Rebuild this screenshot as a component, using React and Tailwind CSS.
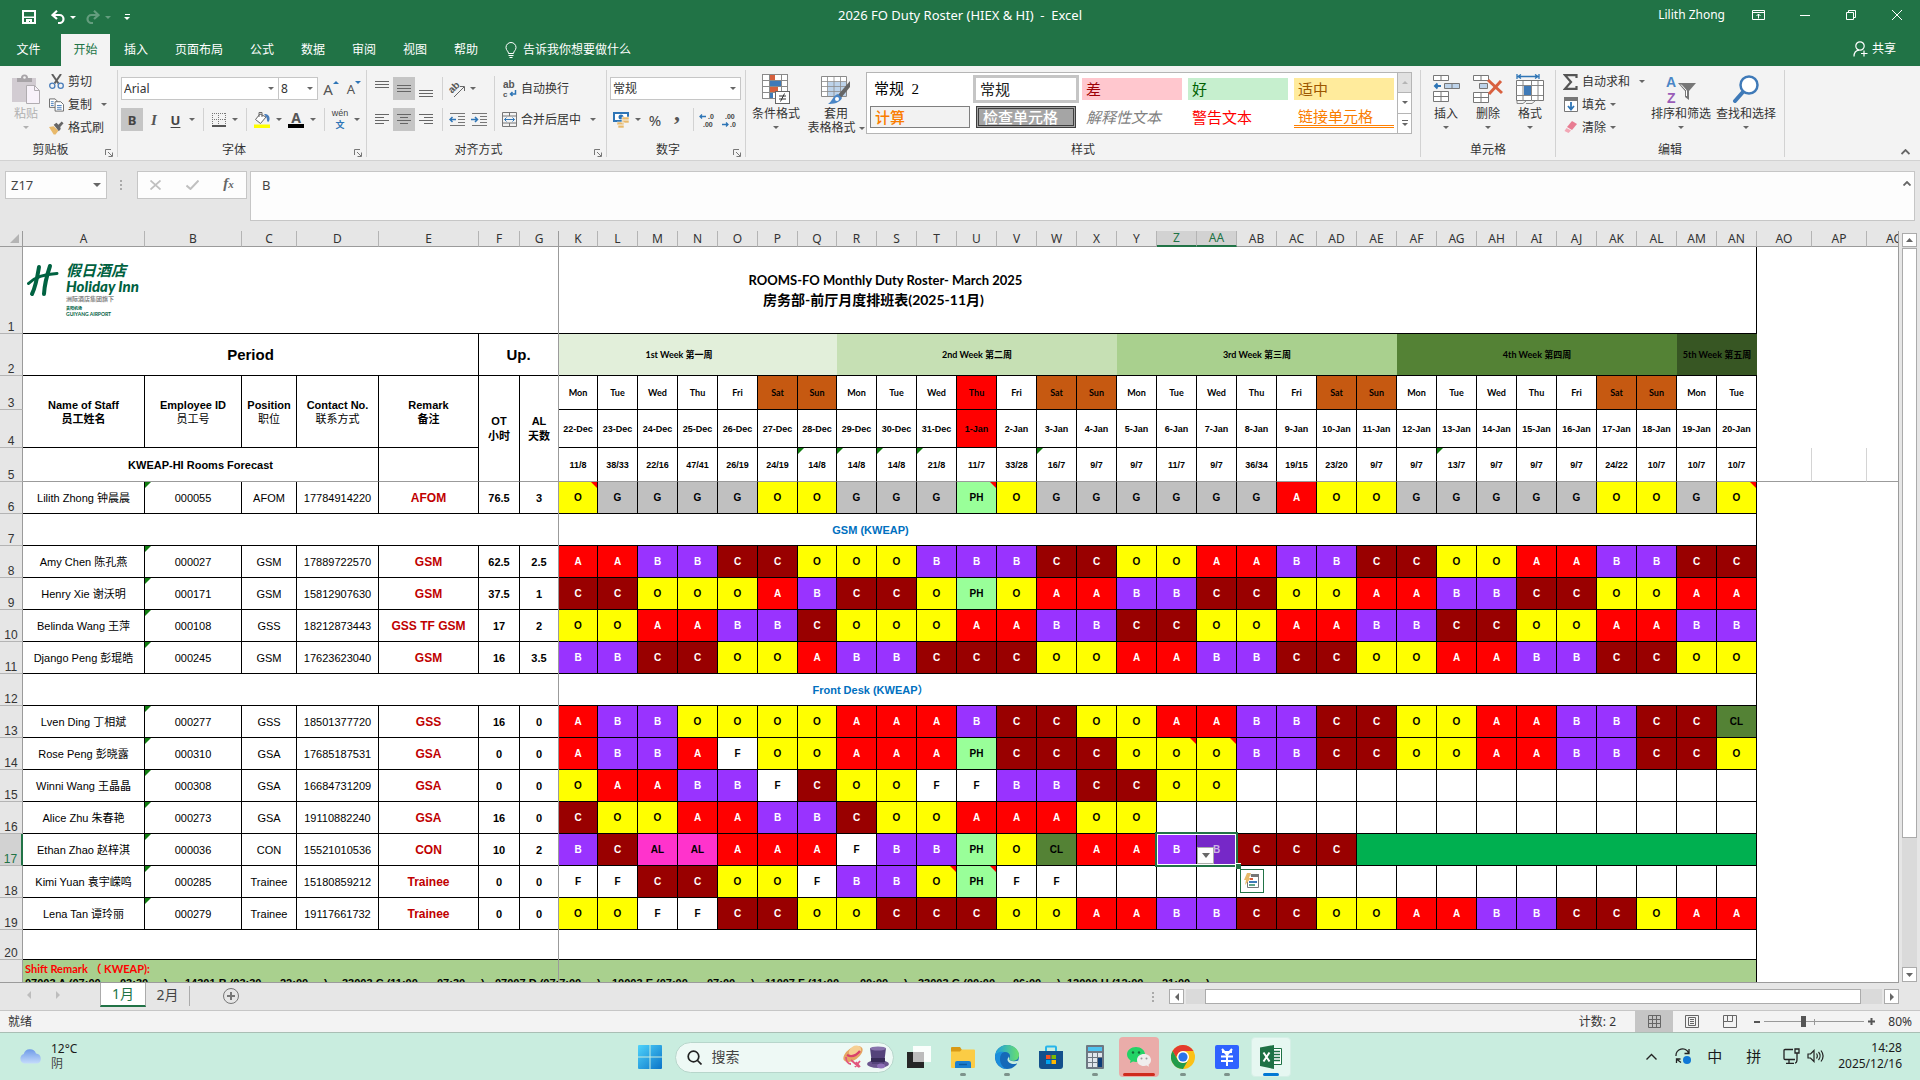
import React from "react";

/* ---------- sheet data ---------- */

const COLUMNS = [
  ["A", 122], ["B", 97], ["C", 55], ["D", 82], ["E", 100], ["F", 41], ["G", 39],
  ["K", 39], ["L", 40], ["M", 40], ["N", 40], ["O", 40], ["P", 40], ["Q", 39],
  ["R", 40], ["S", 40], ["T", 40], ["U", 40], ["V", 40], ["W", 40], ["X", 40],
  ["Y", 40], ["Z", 40], ["AA", 40], ["AB", 40], ["AC", 40], ["AD", 40], ["AE", 40],
  ["AF", 40], ["AG", 40], ["AH", 40], ["AI", 40], ["AJ", 40], ["AK", 40], ["AL", 40],
  ["AM", 40], ["AN", 40], ["AO", 55], ["AP", 55], ["AQ", 0],
];

const WEEKDAYS = ["Mon", "Tue", "Wed", "Thu", "Fri", "Sat", "Sun"];
const DAYS = Array.from({ length: 30 }, (_, i) => ({
  name: WEEKDAYS[i % 7],
  date: i < 10 ? `${22 + i}-Dec` : `${i - 9}-Jan`,
  holiday: i === 10,
  weekend: i % 7 > 4,
}));

const FORECAST =
  "11/8 38/33 22/16 47/41 26/19 24/19 14/8^ 14/8^ 14/8^ 21/8^ 11/7 33/28 16/7^ 9/7 9/7 11/7 9/7 36/34 19/15 23/20 9/7 9/7 13/7^ 9/7 9/7 9/7 24/22 10/7 10/7 10/7".split(" ");

const CODE_STYLE = {
  O: "bg-[#ffff00] text-black",
  G: "bg-[#c0c0c0] text-black",
  A: "bg-[#ff0000] text-white",
  B: "bg-[#9933ff] text-white",
  C: "bg-[#990000] text-white",
  PH: "bg-[#99ff99] text-black",
  AL: "bg-[#ff33cc] text-black",
  CL: "bg-[#548235] text-black",
  F: "bg-white text-black",
  _: "bg-white text-transparent",
};

const TEAM = [
  { row: 6, name: "Lilith Zhong 钟晨晨", id: "000055", pos: "AFOM", tel: "17784914220", remark: "AFOM", ot: "76.5", al: "3",
    codes: "O* G G G G O O G G G PH* O G G G G G G A O O G G G G G O O G O*" },
  { row: 7, section: "GSM (KWEAP)" },
  { row: 8, name: "Amy Chen 陈孔燕", id: "000027", pos: "GSM", tel: "17889722570", remark: "GSM", ot: "62.5", al: "2.5",
    codes: "A A B B C C O O O B B B C C O O A A B B C C O O A A B B C C" },
  { row: 9, name: "Henry Xie 谢沃明", id: "000171", pos: "GSM", tel: "15812907630", remark: "GSM", ot: "37.5", al: "1",
    codes: "C C O O O A B C C O PH O A A B B C C O O A A B B C C O O A A" },
  { row: 10, name: "Belinda Wang 王萍", id: "000108", pos: "GSS", tel: "18212873443", remark: "GSS TF GSM", ot: "17", al: "2",
    codes: "O O A A B B C O O O A A B B C C O O A A B B C C O O A A B B" },
  { row: 11, name: "Django Peng 彭琨皓", id: "000245", pos: "GSM", tel: "17623623040", remark: "GSM", ot: "16", al: "3.5",
    codes: "B B C C O O A B B C C C O O A A B B C C O O A A B B C C O O" },
  { row: 12, section: "Front Desk (KWEAP）" },
  { row: 13, name: "Lven Ding 丁相斌", id: "000277", pos: "GSS", tel: "18501377720", remark: "GSS", ot: "16", al: "0",
    codes: "A B B O O O O A A A B C C O O A A B B C C O O A A B B C C CL" },
  { row: 14, name: "Rose Peng 彭晓露", id: "000310", pos: "GSA", tel: "17685187531", remark: "GSA", ot: "0", al: "0",
    codes: "A B B A F O O A A A PH C C C O O* O* B B C C O O A A B B C C O" },
  { row: 15, name: "Winni Wang 王晶晶", id: "000308", pos: "GSA", tel: "16684731209", remark: "GSA", ot: "0", al: "0",
    codes: "O A A B B F C O O F F B B C C O O _ _ _ _ _ _ _ _ _ _ _ _ _" },
  { row: 16, name: "Alice Zhu 朱春艳", id: "000273", pos: "GSA", tel: "19110882240", remark: "GSA", ot: "16", al: "0",
    codes: "C O O A A B B C O O A A A O O _ _ _ _ _ _ _ _ _ _ _ _ _ _ _" },
  { row: 17, name: "Ethan Zhao 赵梓淇", id: "000036", pos: "CON", tel: "15521010536", remark: "CON", ot: "10", al: "2",
    codes: "B C AL AL A A A F B B PH O CL A A B B C C C", rest: 10 },
  { row: 18, name: "Kimi Yuan 袁宇嵘鸣", id: "000285", pos: "Trainee", tel: "15180859212", remark: "Trainee", ot: "0", al: "0",
    codes: "F F C C O O F B B O* PH* F F _ _ _ _ _ _ _ _ _ _ _ _ _ _ _ _ _" },
  { row: 19, name: "Lena Tan 谭玲丽", id: "000279", pos: "Trainee", tel: "19117661732", remark: "Trainee", ot: "0", al: "0",
    codes: "O O F F C C O O C C C O O A A B B C C O O A A B B C C O A A" },
];

const SHIFTS = [
  ["07003 A (07:00", "03:30", "w-[160px]"],
  ["14301 B (03:30", "22:00", "w-[157px]"],
  ["33003 C (11:00", "07:30", "w-[153px]"],
  ["07007 D (07:7:00", "", "w-[117px]"],
  ["10003 E (07:00", "07:00", "w-[153px]"],
  ["11007 F (11:00", "00:00", "w-[153px]"],
  ["33003 G (00:00", "06:00", "w-[149px]"],
  ["12000 H (12:00", "21:00", "w-[153px]"],
];

const UI = "font-['Noto_Sans','Noto_Sans_CJK_SC',sans-serif]";
const ARIAL = "font-['Liberation_Sans','Noto_Sans_CJK_SC',sans-serif]";
const CALIBRI = "font-['Lato','Noto_Sans_CJK_SC',sans-serif]";
const GLYPH = "Liberation Sans, sans-serif";

/* ---------- small pieces ---------- */

const Caret = ({ className = "text-[#666]" }) => (
  <svg viewBox="0 0 6 3" className={`h-[3px] w-[6px] shrink-0 ${className}`} fill="currentColor"><path d="M0 0h6L3 3z" /></svg>
);
const CaretButton = ({ label, className = "text-[#666]" }) => (
  <button type="button" aria-label={label} className="flex h-full w-3 items-center justify-center"><Caret className={className} /></button>
);
const Sep = () => <span className="mr-1 ml-[5px] h-full w-px shrink-0 bg-[#d2d2d2]" />;

const Group = ({ label, launcher, className = "", labelClass = "", children }) => (
  <section aria-label={label} className={`flex h-[87px] shrink-0 flex-col border-r border-[#d2d2d2] ${className}`}>
    <div className="flex flex-1 items-start">{children}</div>
    <div className="relative flex h-[14px] items-center justify-center leading-[14px] text-[#333]">
      <span className={labelClass}>{label}</span>
      {launcher && (
        <button type="button" aria-label={`${label} 设置`} className="absolute right-[4px] bottom-0">
          <svg viewBox="0 0 8 8" className="h-2 w-2" fill="none" stroke="#777"><path d="M.5 6V.5H6M3 3l4 4M7.500 3.500v4h-4" /></svg>
        </button>
      )}
    </div>
  </section>
);

const Big = ({ icon, label, label2, className = "", dim }) => (
  <button type="button" className={`flex shrink-0 flex-col items-center pt-1 ${dim ? "text-[#b1b1b1]" : "text-[#333]"} ${className}`}>
    <span className="flex h-[30px] items-center justify-center">{icon}</span>
    <span className="mt-[3px] leading-[14px] whitespace-nowrap">{label}</span>
    {label2 ? (
      <span className="flex items-center gap-[3px] leading-[14px] whitespace-nowrap">{label2}<Caret /></span>
    ) : (
      <span className="mt-[5px] flex"><Caret className={dim ? "text-[#b1b1b1]" : "text-[#666]"} /></span>
    )}
  </button>
);

const Small = ({ icon, label, caret, gap = "ml-[3px]" }) => (
  <button type="button" className="flex h-[23px] items-center gap-1 whitespace-nowrap text-[#333]">
    <span className="flex w-[15px] justify-center">{icon}</span>
    <span>{label}</span>
    {caret && <span className={gap}><Caret /></span>}
  </button>
);

const Tool = ({ label, on, className = "w-[22px]", children }) => (
  <button type="button" aria-label={label} aria-pressed={on ? true : undefined}
    className={`flex h-[23px] shrink-0 items-center justify-center ${on ? "bg-[#c5c5c5]" : ""} ${className}`}>{children}</button>
);

const Combo = ({ label, value, className }) => (
  <div className={`relative h-[23px] shrink-0 ${className}`}>
    <select aria-label={label} defaultValue={value} className="h-full w-full appearance-none border border-[#c6c6c6] bg-white pl-[2px] text-[#333]">
      <option>{value}</option>
    </select>
    <span className="pointer-events-none absolute inset-y-0 right-[5px] flex items-center"><Caret /></span>
  </div>
);

const Lines = ({ d, y = 0 }) => (
  <svg viewBox="0 0 16 22" className="h-[22px] w-4" stroke="#666" shapeRendering="crispEdges">
    <path transform={`translate(0 ${y})`} d={d} />
  </svg>
);
const L_FULL = "M1 7.500h14M1 10.500h14M1 13.500h14";

/* ---------- ribbon icons ---------- */

const PasteIcon = () => (
  <svg viewBox="0 0 28 30" className="h-[30px] w-7">
    <path fill="#d2ccd2" d="M0 4h24v24H0z" /><path fill="#a8a4a8" d="M5 4h4a3.500 3.500 0 0 1 7 0h4v4H5z" /><circle cx="12.500" cy="3.500" r="1.300" fill="#f3f3f3" />
    <path fill="#f8f2fa" stroke="#b0acb0" d="M14.500 11.500h8l5 5v13h-13z" /><path fill="none" stroke="#b0acb0" d="M22.500 11.500v5h5" />
  </svg>
);
const CutIcon = () => (
  <svg viewBox="0 0 15 15" className="h-[15px] w-[15px]" fill="none">
    <path stroke="#5f5f5f" strokeWidth="2" d="M3 0l6.500 9.500M12 0L5.500 9.500" />
    <circle cx="3.300" cy="11.700" r="2.600" stroke="#4a7ebb" strokeWidth="1.300" /><circle cx="11.700" cy="11.700" r="2.600" stroke="#4a7ebb" strokeWidth="1.300" />
  </svg>
);
const CopyIcon = () => (
  <svg viewBox="0 0 16 14" className="h-[14px] w-4" fill="#fff" stroke="#666">
    <path d="M.5.500h6l2 2v7h-8z" /><path d="M6.500 3.500h6l3 3v7h-9z" /><path stroke="#4a7ebb" d="M2 3.500h3M2 5.500h3M2 7.500h3M8.500 7.500h5M8.500 9.500h5M8.500 11.500h5" />
  </svg>
);
const BrushIcon = () => (
  <svg viewBox="0 0 16 14" className="h-[14px] w-4">
    <path fill="#e8b96a" d="M0 6l5-1 5 5-3 4H5z" /><path fill="#666" d="M5 3.500l3-2 2 2L13.500 0l2 2-3.500 4 .5 2-2 2.500z" />
  </svg>
);
const BorderIcon = () => (
  <svg viewBox="0 0 14 14" className="h-[14px] w-[14px]" stroke="#777" shapeRendering="crispEdges">
    <path strokeDasharray="1 1" d="M0 .5h14M0 6.500h14M.5 0v13M6.500 0v13M13.500 0v13" /><path strokeWidth="2" stroke="#555" d="M0 13h14" />
  </svg>
);
const FillIcon = () => (
  <svg viewBox="0 0 16 17" className="h-[17px] w-4">
    <path fill="#fff" stroke="#666" d="M6 3L1.500 8.500 6.500 12.500 12 6z" /><path fill="none" stroke="#666" d="M5 6V1.500h3V6" />
    <path fill="#4a7ebb" d="M10 3c4 0 6 2 5.500 5.500S13 11 13 9c0-2-.5-3-3-6z" /><path fill="#ff0" d="M0 13.500h16V17H0z" />
  </svg>
);
const FontColorIcon = () => (
  <span className="flex w-4 flex-col items-center"><b className="text-[14px] leading-[13px] text-[#555]">A</b><span className="h-[4px] w-4 bg-black" /></span>
);
const WrapIcon = () => (
  <svg viewBox="0 0 14 20" className="h-5 w-[14px] overflow-visible" fontFamily={GLYPH}>
    <text x="0" y="9" fontSize="10" fontWeight="700" fill="#555">ab</text><text x="0" y="18" fontSize="8" fontWeight="700" fill="#555">c</text>
    <path fill="none" stroke="#2e75b6" strokeWidth="1.500" d="M12.500 11v4H7.500M9.500 13l-2 2 2 2" />
  </svg>
);
const MergeIcon = () => (
  <svg viewBox="0 0 15 15" className="h-[15px] w-[15px]" fill="none" stroke="#777">
    <path d="M.5.500h14v14H.5zM.5 4h14M.5 11h14M7.500 0v4M7.500 11v4" /><path stroke="#2e75b6" d="M2.500 7.500h10M4.500 5.500l-2 2 2 2M10.500 5.500l2 2-2 2" />
  </svg>
);
const IndentIcon = ({ right }) => (
  <svg viewBox="0 0 16 13" className="h-[13px] w-4" stroke="#777" fill="none">
    <path d="M1 .5h15M9 3.500h7M9 6.500h7M9 9.500h7M1 12.500h15" /><path stroke="#2e75b6" strokeWidth="1.500" d={right ? "M0 6.500h6M4 4l2.500 2.500L4 9" : "M7 6.500H1M3.500 4L1 6.500 3.500 9"} />
  </svg>
);
const MoneyIcon = () => (
  <svg viewBox="0 0 16 17" className="h-[17px] w-4">
    <path fill="#fff" stroke="#2e75b6" strokeWidth="2" d="M1 2h14v8H1z" /><circle cx="8" cy="6" r="2.500" fill="#2e75b6" />
    <path fill="#e8b96a" stroke="#f3f3f3" strokeWidth=".6" d="M9 6h7v3H9zM9 9h7v3H9zM4 11h7v3H4zM5 14h6v3H5z" />
  </svg>
);
const DecimalIcon = ({ more }) => (
  <svg viewBox="0 0 16 16" className="h-4 w-4 overflow-visible" fontFamily={GLYPH}>
    <text x={more ? 9 : 4} y="7" fontSize="7" fontWeight="700" fill="#444">{more ? ".0" : ".00"}</text><text x={more ? 4 : 9} y="15" fontSize="7" fontWeight="700" fill="#444">{more ? ".00" : ".0"}</text>
    <path fill="none" stroke="#2e75b6" strokeWidth="1.300" d={more ? "M7 4.500H1M3 2.500l-2 2 2 2" : "M1 12.500h6M5 10.500l2 2-2 2"} />
  </svg>
);
const CondIcon = () => (
  <svg viewBox="0 0 30 30" className="h-[30px] w-[30px]" fill="none" stroke="#8a8a8a" shapeRendering="crispEdges">
    <path fill="#fff" d="M1.500.500h25v24h-25z" /><path d="M1 6.500h25M1 12.500h25M1 18.500h25M8.500 0v24M20.500 0v24" />
    <path fill="#d6603d" stroke="none" d="M9 1h5v5H9zM9 13h8v5H9z" /><path fill="#3f7ab8" stroke="none" d="M9 7h11v5H9zM9 19h3v5H9z" />
    <path fill="#fff" stroke="#666" d="M14.500 17.500h14v12h-14z" /><path stroke="#333" shapeRendering="auto" d="M18 22h7M18 25h7M23.500 19.500l-4 8" />
  </svg>
);
const TableStyleIcon = () => (
  <svg viewBox="0 0 30 30" className="h-[30px] w-[30px]">
    <path fill="#fff" stroke="#8a8a8a" d="M.5 2.500h25v20h-25z" /><path fill="#bdd3ea" d="M7 8h18v14H7z" /><path fill="none" stroke="#8a8a8a" strokeWidth=".8" d="M0 7.500h25M0 12.500h25M0 17.500h25M6.500 2v20M13 2v20M19.500 2v20" />
    <path fill="#666" d="M29 7v6l-9 11-3-3z" /><path fill="#4a86c6" d="M17 20l4 4c-2 5-9 6-14 6 4-2 5-9 10-10z" /><circle cx="16" cy="25" r="2" fill="#fff" />
  </svg>
);
const InsertCellsIcon = () => (
  <svg viewBox="0 0 27 28" className="h-7 w-[27px]" fill="#fff" stroke="#777">
    <path d="M.5.500h15v5H.5zM8 .5v5M.5 16.500h15v10H.5zM8 16.500v10M.5 21.500h15" /><path fill="#bdd3ea" d="M11.500 8.500h15v5h-15zM19 8.500v5" /><path fill="none" stroke="#2e75b6" strokeWidth="2" d="M8 11H2M4.500 8.500L2 11l2.500 2.500" />
  </svg>
);
const DeleteCellsIcon = () => (
  <svg viewBox="0 0 30 28" className="h-7 w-[30px]" fill="#fff" stroke="#777">
    <path d="M.5.500h15v5H.5zM8 .5v5M.5 17.500h15v10H.5zM8 17.500v10M.5 22.500h15" /><path fill="#bdd3ea" d="M6.500 8.500h8v5h-8z" /><path fill="none" stroke="#d9603f" strokeWidth="3" d="M15 5l14 13M28 6L16 19" />
  </svg>
);
const FormatCellsIcon = () => (
  <svg viewBox="0 0 28 30" className="h-[30px] w-7" fill="none" stroke="#888">
    <path stroke="#2e75b6" strokeWidth="1.300" d="M1 0v5M23 0v5M2 2.500h20M5 .5l-3 2 3 2M19 .5l3 2-3 2" /><path fill="#fff" stroke="#777" d="M.5 6.500h27v20H.5z" /><path d="M7 7v20M15.500 7v20M22 7v20M0 11.500h27M0 21.500h27" />
    <path fill="#3f7ab8" stroke="none" d="M8 12h7v9H8z" /><path d="M1 27v2.500h6l3-2.500M10 29.500h6l3-2.500" />
  </svg>
);
const FillDownIcon = () => (
  <svg viewBox="0 0 14 15" className="h-[15px] w-[14px]"><path fill="#fff" stroke="#777" d="M.5.500h13v14H.5z" /><path fill="#777" d="M0 0h14v4H0z" /><path fill="none" stroke="#2e75b6" strokeWidth="1.800" d="M7 5v7M4 9l3 3.500L10 9" /></svg>
);
const EraserIcon = () => (
  <svg viewBox="0 0 14 13" className="h-[13px] w-[14px]"><path fill="#e87c92" d="M8 0l5 3-5 6-5-3z" /><path fill="#f2a7b5" d="M2.500 7l4.500 2.500L4.500 12 .5 10z" /></svg>
);
const SortIcon = () => (
  <svg viewBox="0 0 30 30" className="h-[30px] w-[30px] overflow-visible" fontFamily={GLYPH}>
    <text x="0" y="13" fontSize="14" fontWeight="700" fill="#4a86c6">A</text><text x="1" y="29" fontSize="14" fontWeight="700" fill="#9a5cb8">Z</text>
    <path fill="#777" d="M12 9h18l-7 8v9l-4-3v-6z" /><path stroke="#fff" d="M15 10.500l5.500 6V22" fill="none" />
  </svg>
);
const FindIcon = () => (
  <svg viewBox="0 0 28 28" className="h-7 w-7" fill="none" stroke="#3f7ab8"><circle cx="17" cy="10" r="8.500" fill="#fff" strokeWidth="2.500" /><path strokeWidth="4" strokeLinecap="round" d="M10.500 17.500L3 26" /></svg>
);

/* ---------- window sections ---------- */

const MENU = ["插入", "页面布局", "公式", "数据", "审阅", "视图", "帮助"];

function TitleBar() {
  return (
    <header className="relative flex h-[34px] items-center text-white">
      <div className="flex items-center pl-[22px]">
        <button type="button" aria-label="保存"><svg viewBox="0 0 14 14" className="h-[14px] w-[14px]"><path fill="none" stroke="#fff" strokeWidth="2" d="M1 1h12v12H1z" /><path fill="#fff" d="M1 6.500h12v1.500H1zM4 9h6v5H8v-3H7v3H4z" /></svg></button>
        <button type="button" aria-label="撤消" className="ml-[15px]"><svg viewBox="0 0 14 14" className="h-[14px] w-[14px]" fill="none" stroke="#fff" strokeWidth="2.200"><path d="M6 .8L1.500 5 6 9M2 5h6.500a4 4 0 0 1 0 8H7" /></svg></button>
        <span className="ml-[5px]"><Caret className="text-white" /></span>
        <button type="button" aria-label="恢复" className="ml-[10px] opacity-30"><svg viewBox="0 0 14 14" className="h-[14px] w-[14px]" fill="none" stroke="#fff" strokeWidth="2.200"><path d="M8 .8L12.500 5 8 9M12 5H5.500a4 4 0 0 0 0 8H7" /></svg></button>
        <span className="ml-[5px] opacity-30"><Caret className="text-white" /></span>
        <button type="button" aria-label="自定义快速访问工具栏" className="ml-[13px] flex flex-col items-center gap-[2px]"><span className="h-px w-[5px] bg-white" /><Caret className="text-white" /></button>
      </div>
      <h1 className="pointer-events-none absolute inset-x-0 pb-1 text-center text-[13px] whitespace-pre">2026 FO Duty Roster (HIEX &amp; HI)  -  Excel</h1>
      <div className="ml-auto flex items-center pr-[18px] pb-1">
        <span className="mr-[27px]">Lilith Zhong</span>
        <button type="button" aria-label="功能区显示选项" className="mr-[35px]"><svg viewBox="0 0 13 10" className="h-[10px] w-[13px]" fill="none" stroke="#fff"><path d="M.5.500h12v9H.5zM.5 2.500h12M6.500 8.500V4M4.500 6l2-2 2 2" /></svg></button>
        <button type="button" aria-label="最小化" className="mr-9"><svg viewBox="0 0 10 10" className="h-[10px] w-[10px]" stroke="#fff"><path d="M0 5.500h10" /></svg></button>
        <button type="button" aria-label="还原" className="mr-9"><svg viewBox="0 0 10 10" className="h-[10px] w-[10px]" fill="none" stroke="#fff"><path d="M.5 2.500h7v7h-7zM2.500 2.500v-2h7v7h-2" /></svg></button>
        <button type="button" aria-label="关闭"><svg viewBox="0 0 10 10" className="h-[10px] w-[10px]" stroke="#fff"><path d="M0 0l10 10M10 0L0 10" /></svg></button>
      </div>
    </header>
  );
}

function MenuBar() {
  return (
    <nav className="flex h-8 items-stretch text-white">
      <button type="button" className="w-[61px] pr-1">文件</button>
      <button type="button" className="w-[49px] bg-[#f3f3f3] text-[#217346]">开始</button>
      {MENU.map((m) => <button key={m} type="button" className="ml-px px-[13px]">{m}</button>)}
      <button type="button" className="ml-[14px] flex items-center gap-[6px]">
        <svg viewBox="0 0 12 17" className="h-[17px] w-3" fill="none" stroke="#fff"><path d="M3.500 11.500C3.500 9 1 8.500 1 5.500a5 5 0 0 1 10 0c0 3-2.500 3.500-2.500 6zM3.500 13.500h5M4.500 15.500h3" /></svg>
        告诉我你想要做什么
      </button>
      <button type="button" className="ml-auto flex items-center gap-1 pr-6 pb-[2px]">
        <svg viewBox="0 0 15 16" className="h-4 w-[15px]" fill="none" stroke="#fff" strokeWidth="1.200"><circle cx="7" cy="5" r="4.200" /><path d="M1 15.500C1 12 3 9.500 6 9.200M11 9.500v6M8 12.500h6.500" /></svg>
        共享
      </button>
    </nav>
  );
}

const StyleTile = ({ children, className }) => (
  <button type="button" className={`flex h-[22px] w-[100px] items-center pl-1 text-[15px] leading-[20px] whitespace-pre ${className}`}>{children}</button>
);

function Ribbon() {
  return (
    <div className="flex h-[95px] items-start overflow-hidden border-b border-[#d2d2d2] bg-[#f3f3f3] pt-1">
      <Group label="剪贴板" launcher className="w-[118px]" labelClass="pr-4">
        <Big dim icon={<PasteIcon />} label="粘贴" className="ml-[10px] w-8" />
        <div className="ml-[7px]">
          <Small icon={<CutIcon />} label="剪切" />
          <Small icon={<CopyIcon />} label="复制" caret gap="ml-[5px]" />
          <Small icon={<BrushIcon />} label="格式刷" />
        </div>
      </Group>

      <Group label="字体" launcher className="w-[249px]" labelClass="pr-4">
        <div className="pt-[7px] pl-[3px]">
          <div className="flex">
            <Combo label="字体名称" value="Arial" className="w-[158px]" />
            <Combo label="字号" value="8" className="-ml-px w-[40px]" />
            <Tool label="增大字号" className="w-[26px]"><span className="text-[15px] text-[#555]">A</span><Caret className="mb-3 rotate-180 text-[#2e75b6]" /></Tool>
            <Tool label="减小字号" className="w-[20px]"><span className="text-[13px] text-[#555]">A</span><Caret className="mb-3 text-[#2e75b6]" /></Tool>
          </div>
          <div className="mt-2 flex h-[23px]">
            <Tool label="加粗" on><b className="text-[13px] text-[#444]">B</b></Tool>
            <Tool label="倾斜"><i className="font-['Liberation_Serif'] text-[15px] font-bold text-[#555]">I</i></Tool>
            <Tool label="下划线" className="w-[21px]"><span className="text-[13px] font-bold text-[#444] underline underline-offset-2">U</span></Tool>
            <CaretButton label="下划线选项" /><Sep />
            <Tool label="边框" className="w-[21px]"><BorderIcon /></Tool><CaretButton label="边框选项" /><Sep />
            <Tool label="填充颜色"><FillIcon /></Tool><CaretButton label="填充颜色选项" />
            <Tool label="字体颜色"><FontColorIcon /></Tool><CaretButton label="字体颜色选项" /><Sep />
            <Tool label="显示拼音字段">
              <span className="flex flex-col items-center">
                <span className="font-['Liberation_Sans'] text-[9px] leading-[10px] text-[#444]">wén</span>
                <span className="text-[9px] leading-[13px] font-bold text-[#2e75b6]">文</span>
              </span>
            </Tool>
            <CaretButton label="拼音选项" />
          </div>
        </div>
      </Group>

      <Group label="对齐方式" launcher className="w-[240px]" labelClass="pr-4">
        <div className="pt-[7px] pl-1">
          <div className="flex h-[23px]">
            <Tool label="顶端对齐"><Lines d={L_FULL} y={-4} /></Tool>
            <Tool label="垂直居中" on><Lines d={L_FULL} /></Tool>
            <Tool label="底端对齐"><Lines d={L_FULL} y={5} /></Tool>
            <Sep />
            <Tool label="方向" className="w-5"><svg viewBox="0 0 18 18" className="h-[18px] w-[18px] overflow-visible" fontFamily={GLYPH}><text x="2" y="13" fontSize="10" fontWeight="700" fill="#555" transform="rotate(-45 4 11)">ab</text><path fill="none" stroke="#666" d="M6 17l10-10M12 6.500h4.500V11" /></svg></Tool>
            <CaretButton label="方向选项" />
          </div>
          <div className="mt-2 flex h-[23px]">
            <Tool label="左对齐"><Lines d="M1 5.500h14M1 8.500h9M1 11.500h14M1 14.500h9" /></Tool>
            <Tool label="居中" on><Lines d="M1 5.500h14M4 8.500h8M1 11.500h14M4 14.500h8" /></Tool>
            <Tool label="右对齐"><Lines d="M1 5.500h14M6 8.500h9M1 11.500h14M6 14.500h9" /></Tool>
            <Sep />
            <Tool label="减少缩进量" className="w-5"><IndentIcon /></Tool>
            <Tool label="增加缩进量" className="ml-[2px] w-5"><IndentIcon right /></Tool>
          </div>
        </div>
        <div className="mt-[6px] ml-[5px] h-[55px] w-px bg-[#d2d2d2]" />
        <div className="pt-[7px] pl-[7px]">
          <Small icon={<WrapIcon />} label="自动换行" />
          <div className="mt-2"><Small icon={<MergeIcon />} label="合并后居中" caret gap="ml-[5px]" /></div>
        </div>
      </Group>

      <Group label="数字" launcher className="w-[139px]" labelClass="pr-4">
        <div className="pt-[7px] pl-[3px]">
          <Combo label="数字格式" value="常规" className="w-[131px]" />
          <div className="mt-2 flex h-[23px]">
            <Tool label="会计数字格式"><MoneyIcon /></Tool><CaretButton label="会计格式选项" />
            <Tool label="百分比样式"><span className="text-[15px] text-[#444]">%</span></Tool>
            <Tool label="千位分隔样式"><b className="mb-4 font-['Liberation_Serif'] text-[24px] text-[#555]">,</b></Tool>
            <Sep />
            <Tool label="增加小数位数" className="w-[18px]"><DecimalIcon more /></Tool>
            <Tool label="减少小数位数" className="w-[26px]"><DecimalIcon /></Tool>
          </div>
        </div>
      </Group>

      <Group label="样式" className="w-[675px]">
        <Big icon={<CondIcon />} label="条件格式" className="w-[60px]" />
        <Big icon={<TableStyleIcon />} label="套用" label2="表格格式" className="w-[60px]" />
        <div className="mt-[2px] flex h-[62px] border border-[#b5b5b5] bg-white">
          <div className="grid grid-cols-5 content-start gap-x-[6px] gap-y-[6px] px-[3px] pt-[5px]">
            <StyleTile className="font-['Liberation_Serif','Noto_Sans_CJK_SC'] text-black">常规  2</StyleTile>
            <StyleTile className="bg-white text-[#222] outline-3 outline-[#c5c5c5]">常规</StyleTile>
            <StyleTile className="bg-[#ffc7ce] text-[#9c0006]">差</StyleTile>
            <StyleTile className="bg-[#c6efce] text-[#006100]">好</StyleTile>
            <StyleTile className="bg-[#ffeb9c] text-[#9c5700]">适中</StyleTile>
            <StyleTile className="border border-[#7f7f7f] bg-[#f2f2f2] font-medium text-[#fa7d00]">计算</StyleTile>
            <StyleTile className="border-3 border-double border-[#3f3f3f] bg-[#a5a5a5] font-medium text-white">检查单元格</StyleTile>
            <StyleTile className="text-[#7f7f7f] italic">解释性文本</StyleTile>
            <StyleTile className="text-[#ff0000]">警告文本</StyleTile>
            <StyleTile className="border-b-3 border-double border-[#ff8001] text-[#fa7d00]">链接单元格</StyleTile>
          </div>
          <div className="-my-px -mr-px flex w-[15px] flex-col border border-[#b5b5b5]">
            <button type="button" aria-label="上一行" className="flex flex-1 items-center justify-center border-b border-[#b5b5b5] bg-[#e1e1e1]"><Caret className="rotate-180 text-[#b5b5b5]" /></button>
            <button type="button" aria-label="下一行" className="flex flex-1 items-center justify-center border-b border-[#b5b5b5]"><Caret /></button>
            <button type="button" aria-label="其他样式" className="flex flex-1 flex-col items-center justify-center gap-[2px]"><span className="h-px w-[6px] bg-[#666]" /><Caret /></button>
          </div>
        </div>
      </Group>

      <Group label="单元格" className="w-[135px]">
        <Big icon={<InsertCellsIcon />} label="插入" className="ml-1 w-[42px]" />
        <Big icon={<DeleteCellsIcon />} label="删除" className="w-[42px]" />
        <Big icon={<FormatCellsIcon />} label="格式" className="w-[42px]" />
      </Group>

      <Group label="编辑" className="w-[229px]">
        <div className="w-[92px] pl-[7px]">
          <Small icon={<svg viewBox="0 0 15 16" className="h-4 w-[15px]"><path fill="none" stroke="#555" strokeWidth="2.200" d="M13.500 4V1.200H2L8 8l-6 6.800h11.500V12" /></svg>} label="自动求和" caret gap="ml-[5px]" />
          <Small icon={<FillDownIcon />} label="填充" caret gap="ml-0" />
          <Small icon={<EraserIcon />} label="清除" caret gap="ml-0" />
        </div>
        <Big icon={<SortIcon />} label="排序和筛选" className="w-[66px]" />
        <Big icon={<FindIcon />} label="查找和选择" className="w-[64px]" />
      </Group>
      <button type="button" aria-label="折叠功能区" className="mt-auto mr-[10px] mb-[5px] ml-auto">
        <svg viewBox="0 0 9 6" className="h-[6px] w-[9px]" fill="none" stroke="#666" strokeWidth="1.800"><path d="M.5 5l4-4 4 4" /></svg>
      </button>
    </div>
  );
}

function FormulaBar() {
  return (
    <div className="flex h-[70px] items-start px-[5px] pt-[10px]">
      <div className="relative">
        <input aria-label="名称框" defaultValue="Z17" className="h-7 w-[102px] border border-[#c6c6c6] bg-[#fdfdfd] pl-[5px] text-[13px] text-[#444]" />
        <button type="button" aria-label="名称列表" className="absolute top-3 right-[6px]"><svg viewBox="0 0 8 4" className="h-1 w-2" fill="#666"><path d="M0 0h8L4 4z" /></svg></button>
      </div>
      <svg viewBox="0 0 2 10" className="mt-[9px] ml-[13px] h-[10px] w-[2px]" fill="#aaa"><path d="M0 0h2v2H0zM0 4h2v2H0zM0 8h2v2H0z" /></svg>
      <div className="ml-[15px] flex h-7 w-[110px] items-center justify-around border border-[#c6c6c6] bg-[#fdfdfd]">
        <button type="button" aria-label="取消"><svg viewBox="0 0 11 10" className="h-[10px] w-[11px]" stroke="#c0c0c0" strokeWidth="1.800"><path d="M.5.500l10 9M10.500.500l-10 9" /></svg></button>
        <button type="button" aria-label="输入"><svg viewBox="0 0 13 10" className="h-[10px] w-[13px]" fill="none" stroke="#c0c0c0" strokeWidth="2"><path d="M.5 5.500L4.500 9l8-8.500" /></svg></button>
        <button type="button" aria-label="插入函数" className="pb-1 font-['Liberation_Serif'] text-[15px] leading-4 font-bold text-[#666] italic">f<span className="text-[11px]">x</span></button>
      </div>
      <div className="relative ml-[3px] flex-1">
        <textarea aria-label="编辑栏" defaultValue="B" className="block h-[50px] w-full resize-none overflow-hidden border border-[#c6c6c6] bg-[#fdfdfd] px-[11px] pt-[5px] text-[13px] leading-4 text-[#444]" />
        <button type="button" aria-label="折叠编辑栏" className="absolute top-[10px] right-1"><svg viewBox="0 0 8 5" className="h-[5px] w-2" fill="none" stroke="#666" strokeWidth="1.800"><path d="M.5 4.500L4 1l3.500 3.500" /></svg></button>
      </div>
    </div>
  );
}

/* ---------- grid ---------- */

const GreenCorner = () => <span className="absolute top-0 left-0 h-0 w-0 border-t-[6px] border-r-[6px] border-t-[#107c10] border-r-transparent" />;
const RedCorner = () => <span className="absolute top-0 right-0 h-0 w-0 border-t-[6px] border-l-[6px] border-t-[#ff0000] border-l-transparent" />;

const RowHead = ({ n, h }) => (
  <th scope="row" className={`${h} border-r border-b p-0 align-bottom text-[12px] leading-[11px] font-normal ${n === 17 ? "border-r-2 border-r-[#217346] border-b-[#b4b4b4] bg-[#d2d2d2] text-[#217346]" : "border-r-[#9b9b9b] border-b-[#b4b4b4] text-[#333]"}`}>{n}</th>
);

const K = "border-r border-b border-black p-0 relative";
const WEEK = "border-b border-black p-0 text-[9px] whitespace-nowrap";

function LogoMark() {
  return (
    <span className="absolute top-4 left-1 flex gap-[7px] text-left text-[#00613f]">
      <svg viewBox="0 0 32 35" className="h-[35px] w-8" fill="none" stroke="#006241" strokeLinecap="round">
        <path strokeWidth="4" d="M12 4C10.500 13 9 23 5 31" /><path strokeWidth="4" d="M23 3c-3 9-5.500 19-6 28" /><path strokeWidth="3" d="M1.500 20.500C8 14 18 11 30 10.500" />
      </svg>
      <span className="block">
        <span className="block text-[15px] leading-[15px] font-bold italic">假日酒店</span>
        <span className="block font-['Lato'] text-[15px] leading-[17px] font-black italic">Holiday Inn</span>
        <span className="block text-[6px] leading-[7px] text-[#888]">洲际酒店集团旗下</span>
        <span className="mt-[4px] block text-[4px] leading-[5px]">贵阳机场</span>
        <span className="block text-[5px] leading-[6px] font-bold">GUIYANG AIRPORT</span>
      </span>
    </span>
  );
}

function Selection() {
  return (
    <>
      <span className="pointer-events-none absolute -top-[2px] -left-[2px] z-10 h-[35px] w-[83px] border-2 border-[#217346]"><span className="block h-full w-full border border-white" /></span>
      <span className="absolute top-[29px] left-[78px] z-10 h-[6px] w-[6px] border-t border-l border-white bg-[#217346]" />
      <button type="button" aria-label="选择班次" className="absolute top-[13px] left-[40px] z-10 flex h-[17px] w-[17px] items-center justify-center border border-[#ababab] bg-[#fdfdfd]"><svg viewBox="0 0 8 5" className="h-[5px] w-2" fill="#666"><path d="M0 0h8L4 5z" /></svg></button>
      <button type="button" aria-label="快速分析" className="absolute top-[35px] left-[83px] z-10 flex h-6 w-6 items-center justify-center border border-[#217346] bg-white">
        <svg viewBox="0 0 16 16" className="h-4 w-4"><path fill="#fff" stroke="#777" d="M3.500 8v6.500h11V2h-8" /><path fill="#777" d="M7 1h8v3H7z" /><path fill="#e8b96a" d="M3 0h4L5 5h2L1 12l1-5H0z" /><path fill="#d9603f" d="M6 5h3v2H6z" /><path fill="#3f7ab8" d="M5 8h8v2H5z" /><path fill="#5fa58a" d="M5 11h6v2H5z" /></svg>
      </button>
    </>
  );
}

function StaffRow({ p }) {
  if (p.section) {
    return (
      <tr>
        <RowHead n={p.row} h="h-8" />
        <td colSpan={37} className="relative border-r border-b border-black p-0 pr-[38px] text-[11px] font-bold text-[#0070c0]">{p.section}</td>
        <td colSpan={3} />
      </tr>
    );
  }
  return (
    <tr>
      <RowHead n={p.row} h="h-8" />
      <td className={`${K} whitespace-nowrap`}>{p.name}</td>
      <td className={K}><GreenCorner />{p.id}</td>
      <td className={K}>{p.pos}</td>
      <td className={K}>{p.tel}</td>
      <td className={`${K} text-[12px] font-bold text-[#c00000]`}>{p.remark}</td>
      <td className={`${K} font-bold`}>{p.ot}</td>
      <td className={`${K} font-bold`}>{p.al}</td>
      {p.codes.split(" ").map((raw, i) => {
        const code = raw.replace("*", "");
        const second = p.row === 17 && i === 16;
        return (
          <td key={i} className={`${K} text-[10px] font-bold ${second ? "bg-[#7628c8] text-[#cdb4e6]" : CODE_STYLE[code]}`}>
            {code === "_" ? "" : code}
            {raw.endsWith("*") && <RedCorner />}
            {p.row === 17 && i === 15 && <Selection />}
          </td>
        );
      })}
      {p.rest && <td colSpan={p.rest} className={`${K} bg-[#00b050]`} />}
      <td colSpan={3} />
    </tr>
  );
}

function Grid() {
  return (
    <div className="relative min-w-0 flex-1 overflow-hidden border-r border-b border-[#9b9b9b] bg-white">
      <table className={`w-full table-fixed border-separate border-spacing-0 text-center text-[11px] leading-[14px] text-black ${ARIAL}`}>
        <colgroup>
          <col className="w-[23px] bg-[#e6e6e6]" />
          {COLUMNS.map(([c, w]) => <col key={c} style={w ? { width: w } : undefined} />)}
        </colgroup>
        <thead>
          <tr className={`bg-[#e6e6e6] text-[12px] leading-[14px] text-[#333] ${UI}`}>
            <th aria-label="全选" className="relative h-4 border-r border-b border-[#9b9b9b] p-0"><svg viewBox="0 0 9 9" className="absolute right-[3px] bottom-[3px] h-[9px] w-[9px]" fill="#b4b4b4"><path d="M9 0v9H0z" /></svg></th>
            {COLUMNS.map(([c, w]) => (
              <th key={c} scope="col" className={`h-4 border-r p-0 font-normal whitespace-nowrap ${c === "Z" || c === "AA" ? "border-b-2 border-r-[#b4b4b4] border-b-[#217346] bg-[#d2d2d2] text-[#217346]" : "border-b border-r-[#b4b4b4] border-b-[#9b9b9b]"} ${w ? "" : "border-r-0 pl-[19px] text-left"}`}>{c}</th>
            ))}
          </tr>
        </thead>
        <tbody>
          <tr>
            <RowHead n={1} h="h-[87px]" />
            <td colSpan={37} className={`${K} ${CALIBRI} font-bold`}>
              <LogoMark />
              <div className="pr-2 text-[13px] leading-[20px]">ROOMS-FO Monthly Duty Roster- March 2025</div>
              <div className="pr-8 text-[14px] leading-[20px]">房务部-前厅月度排班表(2025-11月)</div>
            </td>
            <td colSpan={3} />
          </tr>
          <tr className="font-bold">
            <RowHead n={2} h="h-[42px]" />
            <td colSpan={5} className={`${K} text-[15px]`}>Period</td>
            <td colSpan={2} className={`${K} text-[15px]`}>Up.</td>
            <td colSpan={7} className={`${WEEK} bg-[#e2efda] ${CALIBRI}`}><div className="pr-[38px]">1st Week 第一周</div></td>
            <td colSpan={7} className={`${WEEK} bg-[#c6e0b4] ${CALIBRI}`}>2nd Week 第二周</td>
            <td colSpan={7} className={`${WEEK} bg-[#a9d08e] ${CALIBRI}`}>3rd Week 第三周</td>
            <td colSpan={7} className={`${WEEK} bg-[#548235] ${CALIBRI}`}>4th Week 第四周</td>
            <td colSpan={2} className={`${WEEK} bg-[#375623] ${CALIBRI}`}>5th Week 第五周</td>
            <td colSpan={3} />
          </tr>
          <tr className="font-bold">
            <RowHead n={3} h="h-[34px]" />
            <td rowSpan={2} className={K}>Name of Staff<br />员工姓名</td>
            <td rowSpan={2} className={K}>Employee ID<br /><span className="font-normal">员工号</span></td>
            <td rowSpan={2} className={K}>Position<br /><span className="font-normal">职位</span></td>
            <td rowSpan={2} className={K}>Contact No.<br /><span className="font-normal">联系方式</span></td>
            <td rowSpan={2} className={K}>Remark<br />备注</td>
            <td rowSpan={3} className="border-r border-b border-r-black border-b-[#9b9b9b] p-0 leading-[15px]">OT<br />小时</td>
            <td rowSpan={3} className="border-r border-b border-r-black border-b-[#9b9b9b] p-0 leading-[15px]">AL<br />天数</td>
            {DAYS.map((d) => (
              <td key={d.date} className={`${K} text-[9px] ${CALIBRI} ${d.holiday ? "bg-[#ff0000]" : d.weekend ? "bg-[#c65911]" : ""}`}>{d.name}</td>
            ))}
            <td colSpan={3} />
          </tr>
          <tr className="font-bold">
            <RowHead n={4} h="h-[38px]" />
            {DAYS.map((d) => <td key={d.date} className={`${K} text-[9px] whitespace-nowrap ${d.holiday ? "bg-[#ff0000]" : ""}`}>{d.date}</td>)}
            <td colSpan={3} />
          </tr>
          <tr className="font-bold">
            <RowHead n={5} h="h-[34px]" />
            <td colSpan={4} className="border-r border-b border-r-black border-b-[#9b9b9b] p-0">KWEAP-HI Rooms Forecast</td>
            <td className="border-r border-b border-r-black border-b-[#9b9b9b] p-0" />
            {FORECAST.map((f, i) => (
              <td key={i} className="relative border-r border-b border-r-black border-b-[#9b9b9b] p-0 text-[9px]">
                {f.endsWith("^") && <GreenCorner />}{f.replace("^", "")}
              </td>
            ))}
            <td className="border-r border-b border-r-[#d4d4d4] border-b-[#9b9b9b]" />
            <td className="border-r border-b border-r-[#d4d4d4] border-b-[#9b9b9b]" />
            <td className="border-b border-[#9b9b9b]" />
          </tr>
          {TEAM.map((p) => <StaffRow key={p.row} p={p} />)}
          <tr>
            <RowHead n={20} h="h-[30px]" />
            <td colSpan={37} className={K} />
            <td colSpan={3} />
          </tr>
          <tr>
            <RowHead n={21} h="h-[120px]" />
            <td colSpan={37} className="border-r border-black bg-[#a9d08e] p-0 pt-px pl-[2px] text-left align-top font-bold whitespace-pre">
              <div className={`text-[11px] leading-[15px] text-[#ff0000] ${CALIBRI}`}>Shift Remark （ KWEAP):</div>
              <div className="flex">
                {SHIFTS.map(([from, to, w]) => (
                  <span key={from} className={`flex shrink-0 ${w}`}><span className={to ? "w-[95px]" : "w-[102px]"}>{from}</span>{to && <span className="w-[44px]">{to}</span>}<span>)</span></span>
                ))}
              </div>
            </td>
            <td colSpan={3} />
          </tr>
        </tbody>
      </table>
      <span className="pointer-events-none absolute top-0 bottom-0 left-[558px] w-px bg-[#9b9b9b]" />
    </div>
  );
}

function VerticalScroll() {
  return (
    <div className="flex w-[21px] flex-col items-center pt-[2px] pb-[1px]">
      <button type="button" aria-label="向上滚动" className="flex h-[14px] w-[15px] items-center justify-center border border-[#ababab] bg-white"><svg viewBox="0 0 7 4" className="h-1 w-[7px]" fill="#666"><path d="M0 4h7L3.500 0z" /></svg></button>
      <div className="flex w-[15px] flex-1 flex-col bg-[#dadada] pt-px">
        <div className="h-[82%] border border-[#ababab] bg-white" />
      </div>
      <button type="button" aria-label="向下滚动" className="flex h-[15px] w-[15px] items-center justify-center border border-[#ababab] bg-white"><svg viewBox="0 0 7 4" className="h-1 w-[7px]" fill="#666"><path d="M0 0h7L3.500 4z" /></svg></button>
    </div>
  );
}

const Tri = ({ left, color }) => <svg viewBox="0 0 4 8" className="h-2 w-1" fill={color}><path d={left ? "M4 0v8L0 4z" : "M0 0v8l4-4z"} /></svg>;

function SheetTabs() {
  return (
    <div className="flex h-[27px] items-start">
      <button type="button" aria-label="上一个工作表" className="mt-2 ml-[27px]"><Tri left color="#bdbdbd" /></button>
      <button type="button" aria-label="下一个工作表" className="mt-2 ml-[25px]"><Tri color="#bdbdbd" /></button>
      <button type="button" className="-mt-px ml-10 h-[25px] w-[46px] border-x border-b-2 border-x-[#ababab] border-b-[#217346] bg-white text-[14px] text-[#217346]">1月</button>
      <button type="button" className="h-[23px] w-[43px] text-[14px] text-[#444]">2月</button>
      <span className="mt-[3px] h-5 w-px bg-[#ababab]" />
      <button type="button" aria-label="新工作表" className="mt-[5px] ml-[33px]"><svg viewBox="0 0 16 16" className="h-4 w-4" fill="none" stroke="#777"><circle cx="8" cy="8" r="7.500" /><path strokeWidth="2" d="M8 4v8M4 8h8" /></svg></button>
      <div className="mt-[6px] ml-auto flex h-[15px] w-[40%] items-center pr-[21px]">
        <svg viewBox="0 0 2 10" className="mr-[15px] h-[10px] w-[2px]" fill="#aaa"><path d="M0 0h2v2H0zM0 4h2v2H0zM0 8h2v2H0z" /></svg>
        <button type="button" aria-label="向左滚动" className="flex h-[15px] w-[15px] items-center justify-center border border-[#ababab] bg-white"><Tri left color="#666" /></button>
        <div className="mx-[2px] flex h-full flex-1 bg-[#dadada] pr-[21px] pl-[19px]"><div className="flex-1 border border-[#ababab] bg-white" /></div>
        <button type="button" aria-label="向右滚动" className="flex h-[15px] w-[15px] items-center justify-center border border-[#ababab] bg-white"><Tri color="#666" /></button>
      </div>
    </div>
  );
}

function StatusBar() {
  return (
    <footer className="flex h-[22px] items-center border-t border-[#c6c6c6] bg-[#f3f3f3] text-[#333]">
      <span className="pl-2">就绪</span>
      <span className="ml-auto">计数: 2</span>
      <button type="button" aria-label="普通" aria-pressed="true" className="ml-[19px] flex h-full w-[38px] items-center justify-center bg-[#c5c5c5]"><svg viewBox="0 0 13 13" className="h-[13px] w-[13px]" fill="none" stroke="#666"><path d="M.5.500h12v12H.5zM.5 4.500h12M.5 8.500h12M4.500.500v12M8.500.500v12" /></svg></button>
      <button type="button" aria-label="页面布局" className="flex h-full w-[38px] items-center justify-center"><svg viewBox="0 0 14 13" className="h-[13px] w-[14px]" fill="none" stroke="#666"><path d="M.5.500h13v12H.5zM3.500 2.500h7v8h-7zM5 4.500h4M5 6.500h4M5 8.500h4" /></svg></button>
      <button type="button" aria-label="分页预览" className="flex h-full w-[38px] items-center justify-center"><svg viewBox="0 0 14 13" className="h-[13px] w-[14px]" fill="none" stroke="#666"><path d="M.5.500h13v12H.5zM4.500.500v6h-4M9.500.500v6h-5" /></svg></button>
      <button type="button" aria-label="缩小" className="ml-[5px] flex h-4 w-[6px] items-center"><span className="h-[2px] w-[6px] bg-[#555]" /></button>
      <span className="relative ml-1 flex h-4 w-[100px] items-center">
        <span className="absolute top-[5px] left-1/2 h-[6px] w-px bg-[#999]" />
        <input type="range" aria-label="缩放" min="10" max="190" defaultValue="80" className="relative h-px w-full appearance-none bg-[#999] [&::-webkit-slider-thumb]:h-[11px] [&::-webkit-slider-thumb]:w-[5px] [&::-webkit-slider-thumb]:appearance-none [&::-webkit-slider-thumb]:bg-[#555]" />
      </span>
      <button type="button" aria-label="放大" className="ml-1"><svg viewBox="0 0 7 7" className="h-[7px] w-[7px]" stroke="#555" strokeWidth="2"><path d="M0 3.500h7M3.500 0v7" /></svg></button>
      <span className="w-[45px] pr-2 text-right">80%</span>
    </footer>
  );
}

/* ---------- taskbar ---------- */

const TaskApp = ({ label, mark, className = "", children }) => (
  <button type="button" aria-label={label} className="relative flex h-12 w-11 items-center justify-center">
    <span className={`flex h-10 w-10 items-center justify-center rounded-[4px] ${className}`}>{children}</span>
    {mark && <span className={`absolute bottom-[5px] h-[3px] rounded-full ${mark}`} />}
  </button>
);

function Taskbar() {
  return (
    <div className="grid h-12 grid-cols-[1fr_auto_1fr] items-center border-t border-[#a9beb4] bg-[#c9eddf] text-[#1b1b1b]">
      <button type="button" aria-label="天气" className="flex items-center gap-2 pb-[2px] pl-[19px] text-left leading-[15px]">
        <svg viewBox="0 0 24 16" className="h-4 w-6"><defs><linearGradient id="cloud" x1="0" y1="0" x2="0" y2="1"><stop offset="0" stopColor="#6f9be8" /><stop offset="1" stopColor="#c4dbfb" /></linearGradient></defs><path fill="url(#cloud)" d="M5 15.500a5 5 0 0 1-.3-9.500A6.500 6.500 0 0 1 17 5.500a5.200 5.200 0 0 1 1.500 10z" /></svg>
        <span>12°C<br /><span className="text-[#444]">阴</span></span>
      </button>

      <div className="flex items-center">
        <TaskApp label="开始">
          <svg viewBox="0 0 24 24" className="h-6 w-6"><defs><linearGradient id="win" x1="0" y1="0" x2="1" y2="1"><stop offset="0" stopColor="#4fd3fb" /><stop offset="1" stopColor="#0a74c8" /></linearGradient></defs><path fill="url(#win)" d="M0 1a1 1 0 0 1 1-1h10.500v11.500H0zM12.500 0H23a1 1 0 0 1 1 1v10.500H12.500zM0 12.500h11.500V24H1a1 1 0 0 1-1-1zM12.500 12.500H24V23a1 1 0 0 1-1 1H12.500z" /></svg>
        </TaskApp>
        <label className="mx-[3px] flex h-[31px] w-[219px] items-center rounded-full border border-[#b7d6cb] bg-[#eef9f5] pr-1 pl-[11px]">
          <svg viewBox="0 0 15 15" className="h-[15px] w-[15px] shrink-0" fill="none" stroke="#222" strokeWidth="1.700"><circle cx="6.500" cy="6.500" r="5.300" /><path d="M10.500 10.500l4 4" /></svg>
          <input type="search" aria-label="搜索" placeholder="搜索" className="ml-[10px] w-0 flex-1 bg-transparent text-[14px] placeholder:text-[#444]" />
          <svg viewBox="0 0 46 24" className="h-6 w-[46px] shrink-0">
            <ellipse cx="10" cy="9" rx="11" ry="6" fill="#e5a662" transform="rotate(-35 10 9)" /><ellipse cx="12" cy="6" rx="6.500" ry="5" fill="#f6cf93" transform="rotate(-35 12 6)" /><path fill="none" stroke="#d9426a" strokeWidth="2.400" d="M4 10c4 2 9 1 13-4" /><path fill="none" stroke="#e2557c" strokeWidth="1.800" d="M3 12c0 4 2 7 5 7M8 15l8 7M13 17l4 5M17 16l-5 6" />
            <ellipse cx="35" cy="19" rx="11" ry="4" fill="#6b568f" /><path fill="#54437a" d="M27 3h16l-2 16H29z" /><ellipse cx="35" cy="3.500" rx="8" ry="2" fill="#8873ac" /><path fill="#372b57" d="M28 13h14v4H28z" /><ellipse cx="38" cy="21" rx="4" ry="2.500" fill="#8f70b8" />
          </svg>
        </label>
        <TaskApp label="任务视图"><svg viewBox="0 0 24 24" className="h-6 w-6"><path fill="#262626" d="M0 7h17v16H0z" /><path fill="#fff" fillOpacity=".9" d="M6 1h18v16H6z" /><path fill="#bcbcbc" d="M6 7h11v10H6z" /></svg></TaskApp>
        <TaskApp label="文件资源管理器" mark="w-[6px] bg-[#7d938b]"><svg viewBox="0 0 24 24" className="h-6 w-6"><path fill="#d99a16" d="M0 3a1 1 0 0 1 1-1h8l2 3v4H0z" /><path fill="#fbcc45" d="M0 6.500h9l2-2h12a1 1 0 0 1 1 1V22a1 1 0 0 1-1 1H1a1 1 0 0 1-1-1z" /><path fill="#1a7fd0" d="M4 23v-5a2 2 0 0 1 2-2h12a2 2 0 0 1 2 2v5z" /><path stroke="#0c5a9e" strokeWidth="1.500" d="M8 19.500h8" /></svg></TaskApp>
        <TaskApp label="Edge" mark="w-[6px] bg-[#7d938b]"><svg viewBox="0 0 24 24" className="h-6 w-6"><defs><linearGradient id="edge" x1="0" y1="0" x2="1" y2="0"><stop offset="0" stopColor="#1b9de2" /><stop offset="1" stopColor="#6be06c" /></linearGradient></defs><circle cx="12" cy="12" r="12" fill="#1569b8" /><path fill="url(#edge)" d="M0 11C1 4 6 0 12 0c7 0 12 5 12 10 0 4-3 6-6 6-2 0-4-.7-4-2 0-.8 1-1.300 1-3 0-2-2-4-5-4-4 0-8 1-10 4z" /><path fill="#1b8edc" d="M0 11c2-4 6-5 9-4-3 1-4 4-4 7 0 5 3 9 7 10C5 24 0 18 0 11z" /><path fill="#c9eddf" d="M14 11c0 1.500-1.500 2-1.500 3.500 0 2.500 3 4.500 6.500 4.500 1.500 0 3-.5 4-1l1-3c-1.500 1-3.500 1.500-5.500 1.200C15.500 16 13.500 15 14 13.500z" /></svg></TaskApp>
        <TaskApp label="Microsoft Store"><svg viewBox="0 0 24 24" className="h-6 w-6"><path fill="none" stroke="#27b5ea" strokeWidth="2" d="M7 6V2.500a1 1 0 0 1 1-1h8a1 1 0 0 1 1 1V6" /><path fill="#12508c" d="M0 6h24v15a3 3 0 0 1-3 3H3a3 3 0 0 1-3-3z" /><path fill="#f25022" d="M7 10h4.500v4H7z" /><path fill="#7fba00" d="M12.500 10H17v4h-4.500z" /><path fill="#00a4ef" d="M7 15h4.500v4H7z" /><path fill="#ffb900" d="M12.500 15H17v4h-4.500z" /></svg></TaskApp>
        <TaskApp label="计算器" mark="w-[6px] bg-[#7d938b]"><svg viewBox="0 0 18 24" className="h-6 w-[18px]"><rect width="18" height="24" rx="1" fill="#6d7882" /><path fill="#4ec3f0" d="M2 2h14v4H2z" /><path fill="#dfe6ec" d="M2 8h4v4H2zM7 8h4v4H7zM12 8h4v4h-4zM2 13h4v4H2zM7 13h4v4H7zM2 18h4v4H2zM7 18h4v4H7z" /><path fill="#0c3c78" d="M12 13h4v9h-4z" /></svg></TaskApp>
        <TaskApp label="微信" mark="w-8 bg-[#cf2b1d]" className="bg-[#eaaca9]"><svg viewBox="0 0 24 20" className="h-5 w-6"><path fill="#23d366" d="M9 0c5 0 9 3.300 9 7.500S14 15 9 15c-1 0-2-.1-3-.4L3 16l.6-2.700C1.400 12 0 9.900 0 7.500 0 3.300 4 0 9 0z" /><circle cx="6" cy="5.500" r="1.200" fill="#136b36" /><circle cx="12" cy="5.500" r="1.200" fill="#136b36" /><path fill="#f0eeee" d="M17 7c4 0 7 2.600 7 6 0 2-1 3.600-2.500 4.700l.5 2-2.300-1.100c-.9.200-1.700.4-2.700.4-4 0-7-2.600-7-6s3-6 7-6z" /><circle cx="14.500" cy="11.500" r="1" fill="#999" /><circle cx="19.500" cy="11.500" r="1" fill="#999" /></svg></TaskApp>
        <TaskApp label="Chrome" mark="w-[6px] bg-[#7d938b]"><svg viewBox="0 0 24 24" className="h-6 w-6"><circle cx="12" cy="12" r="12" fill="#fbc116" /><path fill="#e33b2e" d="M1.600 6A12 12 0 0 1 22.400 6H12a6 6 0 0 0-5.500 3.600L5 12z" /><path fill="#229c4c" d="M1.600 6A12 12 0 0 0 12 24l5.200-9A6 6 0 0 1 6.800 15z" /><circle cx="12" cy="12" r="6" fill="#fff" /><circle cx="12" cy="12" r="4.600" fill="#2a73e8" /></svg></TaskApp>
        <TaskApp label="财务" mark="w-[6px] bg-[#7d938b]"><svg viewBox="0 0 24 24" className="h-6 w-6"><rect width="24" height="24" rx="2" fill="#2f62ff" /><path fill="none" stroke="#fff" strokeWidth="2" d="M7 4l5 6 5-6M12 10v11M6 11.500h12M6 16h12M7 7h10" /></svg></TaskApp>
        <TaskApp label="Excel" mark="w-4 bg-[#0078d4]" className="border border-[#d5efe6] bg-[#e6f7f1]"><svg viewBox="0 0 22 24" className="h-6 w-[22px]"><path fill="#fff" stroke="#1e7145" d="M11 3.500h10.500v16H11z" /><path stroke="#1e7145" strokeWidth="1.500" d="M14 6.500h6M14 9.500h6M14 12.500h6M14 15.500h6" /><path fill="#1e7145" d="M0 2.500L14 0v24L0 21z" /><path stroke="#fff" strokeWidth="2" d="M3.500 7.500l6 9M9.500 7.500l-6 9" /></svg></TaskApp>
      </div>

      <div className="flex items-center justify-end pr-[18px] pb-[2px]">
        <button type="button" aria-label="显示隐藏的图标"><svg viewBox="0 0 11 7" className="h-[7px] w-[11px]" fill="none" stroke="#222" strokeWidth="1.400"><path d="M.5 6.500l5-5 5 5" /></svg></button>
        <button type="button" aria-label="更新" className="ml-[18px]"><svg viewBox="0 0 16 16" className="h-4 w-4" fill="none" stroke="#222" strokeWidth="1.300"><path d="M1 8a6.500 6.500 0 0 1 12.500-3M14 1v4.500h-4.500M6 14.500L2 11.500M1.500 15v-4h4" /><circle cx="12" cy="12" r="4" fill="#0f78d6" stroke="none" /></svg></button>
        <button type="button" className="ml-4 text-[15px] leading-5">中</button>
        <button type="button" className="ml-6 text-[15px] leading-5">拼</button>
        <button type="button" aria-label="网络和音量" className="ml-[22px] flex items-center gap-[7px]">
          <svg viewBox="0 0 17 16" className="h-4 w-[17px]" fill="none" stroke="#222" strokeWidth="1.300"><path d="M10 1.500H2a1 1 0 0 0-1 1v8a1 1 0 0 0 1 1h10M6 12v3M3 15.300h8M12 1h4v4h-4zM14 5v6c0 3-1 4-2 4" /></svg>
          <svg viewBox="0 0 17 14" className="h-[14px] w-[17px]" fill="none" stroke="#222" strokeWidth="1.200"><path d="M1 5h2.500L7 1.500v11L3.500 9H1zM9.500 4.500c1 1.500 1 3.500 0 5M11.500 3c2 2.300 2 5.700 0 8M14 1.500c2.500 3.300 2.500 7.700 0 11" /></svg>
        </button>
        <time className="ml-[14px] text-right leading-[16px]" dateTime="2025-12-16T14:28">14:28<br />2025/12/16</time>
      </div>
    </div>
  );
}

export default function App() {
  return (
    <div className={`flex h-screen w-full flex-col overflow-hidden bg-[#e6e6e6] text-[12px] leading-4 ${UI}`}>
      <div className="shrink-0 bg-[#217346]"><TitleBar /><MenuBar /></div>
      <div className="shrink-0"><Ribbon /><FormulaBar /></div>
      <main className="flex min-h-0 flex-1"><Grid /><VerticalScroll /></main>
      <div className="shrink-0"><SheetTabs /><StatusBar /><Taskbar /></div>
    </div>
  );
}
